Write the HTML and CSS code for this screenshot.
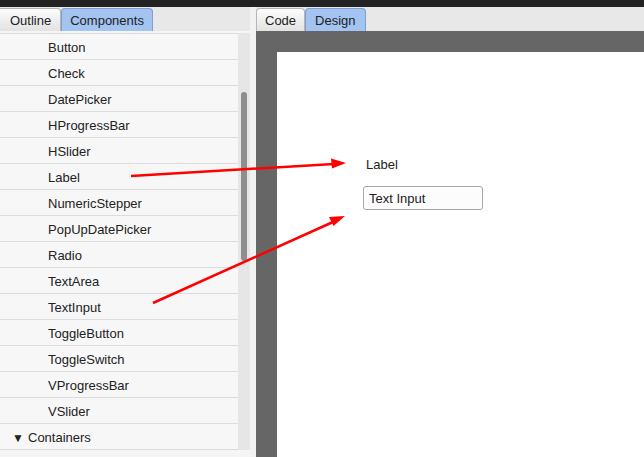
FILE: index.html
```html
<!DOCTYPE html>
<html>
<head>
<meta charset="utf-8">
<link rel="stylesheet" href="styles.css">
</head>
<body>
<div class="topbar"></div>
<div class="main">
  <div class="left">
    <div class="tabs">
      <div class="tab">Outline</div>
      <div class="tab active">Components</div>
    </div>
    <div class="listwrap">
      <ul class="list">
        <li>Button</li>
        <li>Check</li>
        <li>DatePicker</li>
        <li>HProgressBar</li>
        <li>HSlider</li>
        <li>Label</li>
        <li>NumericStepper</li>
        <li>PopUpDatePicker</li>
        <li>Radio</li>
        <li>TextArea</li>
        <li>TextInput</li>
        <li>ToggleButton</li>
        <li>ToggleSwitch</li>
        <li>VProgressBar</li>
        <li>VSlider</li>
        <li class="group"><span class="tri">▼</span>Containers</li>
      </ul>
      <div class="track"><div class="thumb"></div></div>
    </div>
  </div>
  <div class="splitter"></div>
  <div class="right">
    <div class="tabs">
      <div class="tab">Code</div>
      <div class="tab active wide">Design</div>
    </div>
    <div class="stage">
      <div class="canvas">
        <div class="lbl">Label</div>
        <div class="tinput">Text Input</div>
      </div>
    </div>
  </div>
</div>
<svg class="arrows" width="644" height="457" viewBox="0 0 644 457">
  <line x1="131" y1="176" x2="334" y2="164" stroke="#f00" stroke-width="2.5"/>
  <polygon points="346,163 331,158.5 332,168.5" fill="#f00"/>
  <line x1="153" y1="303" x2="333" y2="222" stroke="#f00" stroke-width="2.5"/>
  <polygon points="345,216 329,217 333.5,226" fill="#f00"/>
</svg>
</body>
</html>
```
FILE: styles.css
```css
html, body {
  margin: 0;
  padding: 0;
  width: 644px;
  height: 457px;
  overflow: hidden;
  background: #f2f2f2;
  font-family: "Liberation Sans", Arial, sans-serif;
  font-size: 13px;
  color: #222;
}
.topbar {
  height: 7px;
  background: #222;
}
.main {
  display: flex;
  height: 450px;
}
.left {
  width: 250px;
  display: flex;
  flex-direction: column;
  background: #f5f5f5;
}
.tabs {
  height: 23px;
  padding-top: 1px;
  display: flex;
  align-items: flex-end;
  background: #e8e8e8;
}
.tab {
  height: 22px;
  line-height: 23px;
  padding: 0 8px;
  border: 1px solid #b5b5b5;
  border-bottom: none;
  border-radius: 4px 4px 0 0;
  background: linear-gradient(#fdfdfd, #e2e2e2);
  color: #222;
  box-sizing: content-box;
}
.tab.active {
  background: #a3c3f0;
  border-color: #7f9fd0;
  padding: 0 8px;
}
.tab.active.wide {
  padding: 0 9px;
}
.left .tab:first-child { border-left: none; border-radius: 0 4px 0 0; padding: 0 9px 0 10px; }
.listwrap {
  display: flex;
  padding-top: 2px;
  height: 417px;
  background: #f5f5f5;
}
.list {
  list-style: none;
  margin: 0;
  padding: 0;
  width: 238px;
  background: #f7f7f7;
  border-top: 1px solid #dcdcdc;
}
.list li {
  height: 24px;
  padding-top: 1px;
  line-height: 25px;
  border-bottom: 1px solid #dcdcdc;
  padding-left: 48px;
  overflow: hidden;
}
.list li.group {
  padding-left: 12px;
}
.tri {
  display: inline-block;
  font-size: 12px;
  width: 16px;
}
.track {
  width: 12px;
  background: #e6e6e6;
  padding-top: 59px;
  box-sizing: border-box;
}
.thumb {
  width: 6px;
  height: 169px;
  margin-left: 3px;
  border-radius: 3px;
  background: #8e8e8e;
}
.splitter {
  width: 6px;
  background: #f2f2f2;
}
.right {
  flex: 1;
  display: flex;
  flex-direction: column;
}
.stage {
  flex: 1;
  background: #666;
  padding: 21px 0 0 21px;
  display: flex;
}
.canvas {
  flex: 1;
  background: #fff;
  position: relative;
}
.lbl {
  position: absolute;
  left: 89px;
  top: 105px;
  line-height: 15px;
}
.tinput {
  position: absolute;
  left: 86px;
  top: 134px;
  width: 113px;
  height: 22px;
  line-height: 24px;
  padding-left: 5px;
  border: 1px solid #a8a8a8;
  border-radius: 3px;
  background: #fcfcfc;
}
.arrows {
  position: absolute;
  left: 0;
  top: 0;
  pointer-events: none;
}
```
